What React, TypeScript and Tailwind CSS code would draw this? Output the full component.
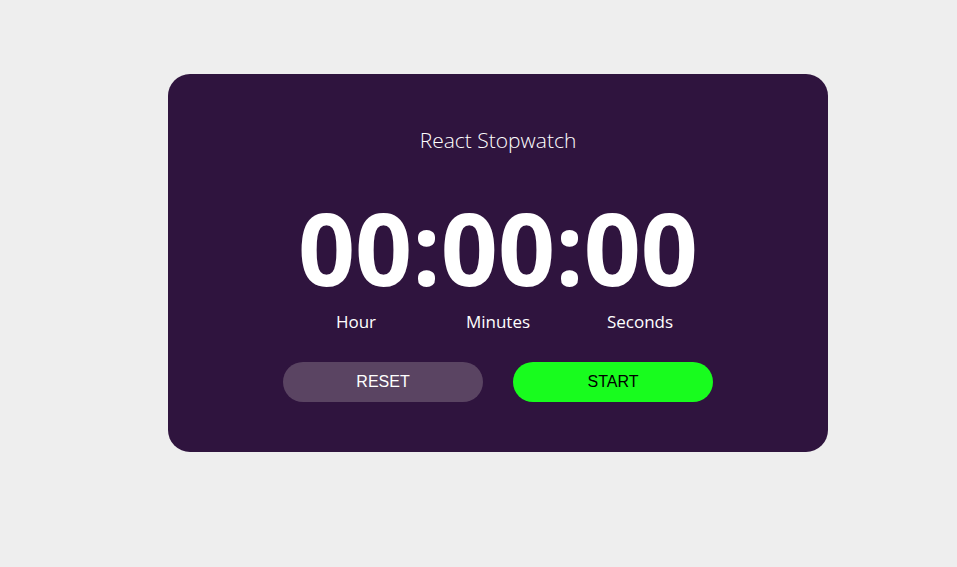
import React from "react";

export default function App() {
  return (
    <div className="min-h-[567px] w-full bg-[#eeeeee] pt-[74px] pl-[168px]">
      <div className="flex h-[378px] w-[660px] flex-col items-center rounded-[22px] bg-[#2f143e] pt-[52px] text-white">
        <h1 className="text-[21px] leading-[28px] font-light text-white font-['Open_Sans',sans-serif]">
          React Stopwatch
        </h1>
        <div className="mt-[55px] text-[100px] leading-[76px] font-bold font-['Open_Sans',sans-serif]">
          00:00:00
        </div>
        <div className="mt-[29px] grid w-[426px] grid-cols-3 text-center text-[17px] leading-[16px] font-['Open_Sans',sans-serif]">
          <span>Hour</span>
          <span>Minutes</span>
          <span>Seconds</span>
        </div>
        <div className="mt-[32px] flex gap-[30px] font-['Liberation_Sans',Arial,sans-serif] text-[16px]">
          <button className="h-[40px] w-[200px] rounded-full bg-[#5a4462] text-white">RESET</button>
          <button className="h-[40px] w-[200px] rounded-full bg-[#18fc1e] text-black">START</button>
        </div>
      </div>
    </div>
  );
}
